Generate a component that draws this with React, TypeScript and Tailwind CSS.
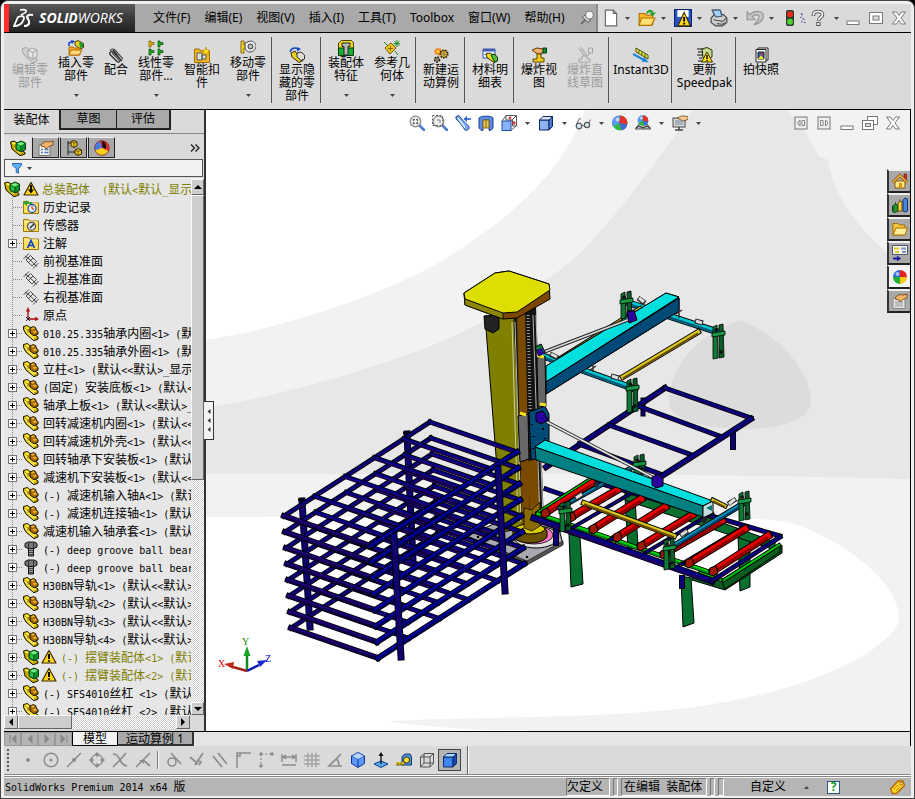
import React from "react";

/* ---------- icons ---------- */

const part = (
  <>
    <path d="M.5 1.500 4.500.5 8 3.500V7l7 5v2l-4 1.800L3 9 .5 4.500z" fill="#b89400" stroke="#1a1400" strokeWidth="1" />
    <path d="M1.500 2 4.500 1.300 7 3.500 4 4.500zM4 8l3-.8 7 5-3 1.300z" fill="#ffe920" />
    <path d="M1.500 3 4 5.500 4.500 8 11 13.500V15L4 8.800 1.500 4.500z" fill="#fff27a" />
    <path d="M7 3 10.500 1.500 13 3v2l2 1.500V9l-4 1.800L7 8z" fill="#a86a00" stroke="#1a1400" />
    <path d="M7.800 3.500 10.500 2.300 12.300 3.300 9.500 4.800zM9.500 6.500 12.500 5.500 14.200 6.800 11.200 8.200z" fill="#f0b030" />
  </>
);
const assembly = (
  <>
    <path d="M.5 2 4 1l3 2v5l8 4.500v1.500l-5 1.800L2 9z" fill="#c8a800" stroke="#1a1400" />
    <path d="M1.500 2.800 4 2 6.500 3.800 4 4.800zM4 8.500 7 7.800 13 12 9.500 13.300z" fill="#fff04a" />
    <path d="M6 3.500 11 1l4.500 2v6.500L11 12 6 9.500z" fill="#109028" stroke="#063a10" />
    <path d="M7 3.800 11 2l3.500 1.500L10.800 5.500z" fill="#7df08a" />
    <path d="M7 5l3.500 1.500v4L7 8.800z" fill="#28c048" />
    <path d="M10.800 6V11.500" stroke="#063a10" strokeWidth=".8" />
  </>
);
const warn = (
  <>
    <path d="M8 1.500 15 14H1z" fill="#ffd51a" stroke="#3a2a00" strokeWidth="1.200" strokeLinejoin="round" />
    <path d="M8 5v5M8 11.200v1.600" stroke="#000" strokeWidth="2" />
  </>
);
const folder = (
  <>
    <path d="M.5 2.500h5L7 4h8.500v10.500H.5z" fill="#ffe05a" stroke="#a07808" />
    <path d="M1.500 5h13" stroke="#fff6b8" />
  </>
);
const plane = (
  <path d="M3 7 7.500 2.500 13.500 8.500 9 13zM5 5l6.500 6M.5 6 6 .5M10 15.500 15.500 10M2 3l3 2M11 11l3 2.500M5.500 9.500 10 5" fill="none" stroke="#222" strokeWidth=".8" />
);
const ball = (
  <>
    <path d="M8 8V1a7 7 0 0 1 7 7z" fill="#e82020" />
    <path d="M8 8h7a7 7 0 0 1-7 7z" fill="#f6c81a" />
    <path d="M8 8v7a7 7 0 0 1-7-7z" fill="#1fae35" />
    <path d="M8 8H1a7 7 0 0 1 7-7z" fill="#2b67e0" />
    <circle cx="5.500" cy="5" r="2" fill="#fff" opacity=".6" />
  </>
);
const viewBall = (
  <>
    <circle cx="8" cy="8" r="7.500" fill="#2fb848" />
    <path d="M7 8 8 .5A7.500 7.500 0 0 1 15.300 9.500z" fill="#e83030" />
    <path d="M7 8 .8 11.500A7.500 7.500 0 0 1 8 .5z" fill="#5a9af0" />
    <path d="M7 8l8.300 1.500A7.500 7.500 0 0 1 10 15.200z" fill="#4468d8" />
    <circle cx="5.500" cy="4.500" r="2" fill="#fff" opacity=".6" />
  </>
);
const hand = (
  <path d="M4 3.500 8 1.500l3 .5 4-1v4l-4 1.500-3 2.500-1-2-4-1z" fill="#f2b56b" stroke="#6b3c0c" strokeWidth=".8" />
);
const funnel = <path d="M2 2h12v2L10 9v6l-3-1.500V9L2 4z" fill="#5ab4f5" stroke="#0a3c98" />;
const cube = (a: string, b: string, c: string) => (
  <>
    <path d="M1.500 5h9.500v10H1.500z" fill={b} stroke="#10286a" />
    <path d="M1.500 5 5 1.500h9.500L11 5z" fill={a} stroke="#10286a" />
    <path d="M11 5l3.500-3.500v10L11 15z" fill={c} stroke="#10286a" />
  </>
);
const gear = (x: number, y: number, r: number, f: string) => (
  <>
    <circle cx={x} cy={y} r={r} fill="none" stroke="#2c1c00" strokeWidth="2" strokeDasharray="1.500 1" />
    <circle cx={x} cy={y} r={r - 0.3} fill={f} stroke="#2c1c00" strokeWidth=".7" />
    <circle cx={x} cy={y} r={r * 0.35} fill="#fff" stroke="#2c1c00" strokeWidth=".7" />
  </>
);
const magnifier = (
  <>
    <path d="M10 10l5 5" stroke="#4b7fd0" strokeWidth="2.600" strokeLinecap="round" />
    <circle cx="6.500" cy="6.500" r="5.300" fill="#f0f0f0" stroke="#888" strokeWidth="1.200" />
  </>
);
const G = "#8d8d8d";

const icons: Record<string, React.ReactNode> = {
  part,
  assembly,
  warn,
  plane,
  ball,
  viewBall,
  funnel,
  rootWarn: (
    <>
      <path d="M8 1.500 15 14H1z" fill="#ffd51a" stroke="#3a2a00" strokeWidth="1.200" strokeLinejoin="round" />
      <path d="M8 4v5" stroke="#000" strokeWidth="1.800" />
      <path d="M5 8.500h6L8 12.500z" fill="#000" />
    </>
  ),
  history: (
    <>
      {folder}
      <path d="M0 4l4-3v2h5v2H4v2z" fill="#2ea82e" />
      <circle cx="9" cy="9.500" r="4" fill="#e8f0ff" stroke="#2c50a8" strokeWidth="1.300" />
      <path d="M9 7v2.500l2 1" stroke="#c01010" fill="none" />
    </>
  ),
  sensor: (
    <>
      {folder}
      <circle cx="8.500" cy="9.300" r="4" fill="#dfe6ee" stroke="#555" strokeWidth="1.300" />
      <path d="M7 11l4-4" stroke="#222" strokeWidth="1.300" />
    </>
  ),
  note: (
    <>
      {folder}
      <path d="M4.500 13 8 5.500 11.500 13M6 10.500h4" stroke="#1046d0" strokeWidth="1.700" fill="none" />
    </>
  ),
  origin: (
    <>
      <path d="M5 13V3M5 12h8" stroke="#a01010" strokeWidth="1.400" />
      <path d="M5 0 2.800 4.500h4.400zM16 12l-4-2.200v4.400z" fill="#b01818" />
      <path d="M3 10l4 4M7 10l-4 4" stroke="#222" />
    </>
  ),
  bolt: (
    <>
      <path d="M2 2.500 5 1h6l3 1.500V6l-3 1.500H5L2 6z" fill="#777" stroke="#111" />
      <path d="M5.500 7.500h5V15h-5z" fill="#aaa" stroke="#111" />
      <path d="M6 9.500h4M6 11.500h4M6 13.500h4M5.500 2v5M10.500 2v5" stroke="#222" strokeWidth=".8" />
    </>
  ),
  editPart: (
    <>
      <path d="M.5 1.500 4.500.5 8 3.500V7l7 5v2l-4 1.800L3 9 .5 4.500z" fill="#d0d0d0" stroke="#a0a0a0" />
      <path d="M6 3 10 1l5 2v6.500L11 12 6 9.500z" fill="#e4e4e4" stroke="#a0a0a0" />
      <path d="M6 3l5 2.500V12M11 5.500 15 3" fill="none" stroke="#a0a0a0" />
    </>
  ),
  insertPart: (
    <>
      <path d="M7 2 10 .5l5.500 3v4L12 9 7 5z" fill="#ead020" stroke="#4a3800" />
      <path d="M11 3l2-1 2 2v3l-3 1z" fill="#16a034" />
      <path d="M1 6V3l3-1.500" stroke="#1246c8" strokeWidth="1.600" fill="none" />
      <path d="M3 0l4 1-3 3z" fill="#1246c8" />
      <path d="M1 7h4l1 1h6v7H1z" fill="#f9a828" stroke="#b06a00" />
      <path d="M3 10h11l-3 5H1z" fill="#ffd878" stroke="#b06a00" />
    </>
  ),
  clip: (
    <>
      <path d="M14 14 5 5a2 2 0 0 0-3 2.500l7 7a2 2 0 0 0 3-2.500L5 2.500" fill="none" stroke="#333" strokeWidth="1.400" />
      <path d="M2 4a3 3 0 0 1 5-1l8 9M4 6l8 8" fill="none" stroke="#555" strokeWidth="1.200" />
    </>
  ),
  pattern: (
    <>
      <path d="M1 1h2v1.500h3v2H3V7H1z" fill="#f0c000" stroke="#6a5000" strokeWidth=".7" />
      <path d="M10 1h2v1.500h3v2h-3V7h-2zM1 9h2v1.500h3v2H3V15H1zM10 9h2v1.500h3v2h-3V15h-2z" fill="#18b020" stroke="#064a0c" strokeWidth=".7" />
    </>
  ),
  smart: (
    <>
      <path d="M.5 2h5l1 2h9v11.500H.5z" fill="#f5b820" stroke="#a07000" />
      <path d="M3 6h5v7H3zM8 8h4v4H8z" fill="#e0e0e0" stroke="#555" />
      <path d="m12 0 1 3 3 .2-2.400 2L14.500 8 12 6.500 9.500 8l.9-2.800L8 3.200 11 3z" fill="#ffe820" stroke="#b07800" strokeWidth=".6" />
    </>
  ),
  moveComp: (
    <>
      <path d="M1 1h3v4h3v3H4v5H1z" fill="#f4d020" stroke="#6a5000" strokeWidth=".8" />
      <path d="M5 3l5-2c4 0 6 3 6 5s-2 6-6 6-4-3-5-4z" fill="#eee" stroke="#444" />
      <circle cx="10.500" cy="6.500" r="2.500" fill="#bbb" stroke="#333" />
    </>
  ),
  showHide: (
    <>
      <path d="M1 5c1-4 5-5 8-3" stroke="#1246c8" strokeWidth="1.600" fill="none" />
      <path d="M8 0l4 2-4 2.500z" fill="#1246c8" />
      <path d="M2 6 6 4l2 3 6 4.500v2L10 15.500 3 10z" fill="#ecd020" stroke="#3a2c00" />
      <path d="M8 6l4-1 3.500 3v4L12 13.500 8 10z" fill="#ddd" stroke="#333" />
    </>
  ),
  asmFeature: (
    <>
      <path d="M.5 3 3.500.5h10L15.500 3v6H.5z" fill="#f0e020" stroke="#4a3c00" />
      <path d="M.5 8h15v7.500H.5z" fill="#16b030" stroke="#063a10" />
      <path d="M4 3h8v3.500h-2V15H6V6.500H4z" fill="#b8b8b8" stroke="#222" />
    </>
  ),
  refGeom: (
    <>
      <path d="M1 8l6-5 5 5-6 6z" fill="#f2c818" stroke="#7a5800" />
      <path d="M4 8.500h5M6.500 6v5" stroke="#8a6400" />
      <path d="M13 0v7M9.500 3.500h6.500M10.500 1l5 5M15.500 1l-5 5" stroke="#128a1a" strokeWidth=".9" />
      <path d="M0 2l4 4M11 11l3 4" stroke="#128a1a" />
    </>
  ),
  motion: (
    <>
      <path d="m5 0 1 2 2-1-.3 2.300L10 4 8 5.300l.8 2L6.500 7 5 9 4 7l-2.500.5.8-2L.5 4l2.200-.7L2.500 1l2 1z" fill="#f08018" />
      <circle cx="5" cy="4.500" r="1.500" fill="#ffe040" />
      {gear(11, 7, 3.6, "#f0c828")}
      {gear(4, 12.5, 2.3, "#ccc")}
    </>
  ),
  bom: (
    <>
      <path d="M1 2h12v9H1z" fill="#f2f6ff" stroke="#3a56a0" />
      <path d="M1 2h12v2.500H1z" fill="#4060b8" />
      <path d="M1 7.500h12M5 4v7" stroke="#8fa0cc" />
      <path d="M4 7 8 6l7 5v3l-3 1.500-7-5z" fill="#f0e020" stroke="#3a3000" />
      <path d="M9 8l3-1 3.500 3v4l-3 1z" fill="#50c030" stroke="#063a10" />
    </>
  ),
  explode: (
    <>
      <path d="M1 3 6 1l6 1 1 3-5 2-3-1z" fill="#efb068" stroke="#6b3c0c" />
      <path d="M12 1h3.500v5H12z" fill="#109028" stroke="#063a10" />
      <path d="M6 7h4v4h3v4H2v-3h4z" fill="#f2cc18" stroke="#5c4600" />
      <path d="M10 8l3-3" stroke="#222" strokeDasharray="1 1" />
    </>
  ),
  explodeLine: (
    <>
      <path d="M3 1l6 8" stroke="#a2a2a2" strokeWidth="3" />
      <path d="M3 1l6 8" stroke="#ddd" strokeWidth="1.200" />
      <path d="M11.500 1h4v5h-4zM5 9h5v3h3v3H2v-3h3z" fill="#ddd" stroke="#a2a2a2" />
      <path d="M10 9l3-3" stroke="#a2a2a2" />
    </>
  ),
  instant: (
    <>
      <path d="M3 1l12 7v4L3 5z" fill="#e4ea50" stroke="#4c5200" />
      <path d="M6 3v3M9 5v3M12 7v3" stroke="#4c5200" />
      <path d="M0 7l11 6" stroke="#1c86dc" strokeWidth="2" />
      <path d="M15.500 15.500 8.500 14.500 11.500 10z" fill="#1c86dc" />
    </>
  ),
  speedpak: (
    <>
      <path d="M5 2l5-1.500L15 3v7l-5 3-4-2z" fill="#c4d890" stroke="#26380a" />
      <path d="M0 2h6M1 5h5M0 8h6M2 11h3M1 14h4" stroke="#111" />
      <path d="M10 5l5.500 10h-11z" fill="#ffdf20" stroke="#3a2a00" />
      <path d="M10 8v4M10 13v1.300" stroke="#000" strokeWidth="1.400" />
    </>
  ),
  snapshot: (
    <>
      <path d="M5 1h10v12H5z" fill="#fff" stroke="#222" />
      <path d="M3 2.500h10V15H3z" fill="#fff" stroke="#222" />
      <path d="M5 5h6v7H5z" fill="#2858b8" stroke="#222" />
      <path d="M5 12l3-4 3 4z" fill="#f0e020" />
      <circle cx="9" cy="7" r="1.200" fill="#e03020" />
    </>
  ),
  newDoc: <path d="M3 1h7l3 3v11H3zM10 1v3h3" fill="#fff" stroke="#666" />,
  openDoc: (
    <>
      <path d="M1 4h5l1.500 1.500H13V14H1z" fill="#f8b828" stroke="#b07000" />
      <path d="M3 8h12l-3 6.500H1z" fill="#ffe070" stroke="#b07000" />
      <path d="M8 4c1-3 4-3 5-1" stroke="#18a028" strokeWidth="1.800" fill="none" />
      <path d="M10 3h6l-3 3.500z" fill="#18a028" />
    </>
  ),
  save: (
    <>
      <path d="M.5 .5h15v15H.5z" fill="#2a56c8" stroke="#0b2470" />
      <path d="M3 1h10v6H3z" fill="#fff" />
      <path d="M9 3l5.500 12h-11z" fill="#ffd51a" stroke="#3a2a00" />
      <path d="M9 7v4M9 12.300v1.400" stroke="#000" strokeWidth="1.700" />
    </>
  ),
  print: (
    <>
      <path d="M2 1h7l2 5H4z" fill="#8fc0f0" stroke="#46607c" />
      <path d="M1 8l3-3h8l3 3v4l-4 3H5l-4-3z" fill="#cfcfcf" stroke="#444" />
      <path d="M2 1h7l1.500 5.500-5.500.5z" fill="#a8d0f4" stroke="#46607c" />
      <path d="M3 9.500l8 1.500 3.500-2.500M6 13l5 .5 2.500-1.500" fill="none" stroke="#555" />
    </>
  ),
  undo: (
    <path d="M1 2.500v7h7L5.500 7C9 4 12 5 11.500 8c-.5 2-2 4-4.500 6 5-1 8-4 8.500-7.500C15.500 1.500 8 .5 3.500 5z" fill="#c6c6c6" stroke="#959595" />
  ),
  traffic: (
    <>
      <rect x="4" y="0" width="8" height="16" rx="2" fill="#2c3c30" />
      <circle cx="8" cy="4.300" r="3" fill="#f02818" />
      <circle cx="8" cy="11.700" r="3" fill="#50d030" />
    </>
  ),
  dots: <path d="M4 2l2 2M3 7h2M6 9l3 1M4 13h2M8 14h2" stroke="#4a3c90" strokeWidth="1.500" />,
  help: (
    <>
      <path d="M3.500 6V4.500c0-4 9-4 9 0 0 3-4 3-4 6.500" fill="none" stroke="#555" strokeWidth="3.600" />
      <path d="M3.500 5.500v-1c0-4 9-4 9 0 0 3-4 3-4 6" fill="none" stroke="#fff" strokeWidth="1.700" />
      <rect x="6.800" y="12.500" width="3.200" height="3" fill="#fff" stroke="#555" />
    </>
  ),
  min: <rect x="2" y="11" width="12" height="3.500" fill="#fff" stroke="#777" />,
  max: (
    <>
      <rect x="1.500" y="2.500" width="13" height="11" fill="#fff" stroke="#777" />
      <rect x="5" y="6" width="6" height="4" fill="#ddd" stroke="#777" />
    </>
  ),
  restore: (
    <>
      <rect x="5.500" y="1.500" width="10" height="8" fill="#fff" stroke="#777" />
      <rect x=".5" y="5.500" width="11" height="9" fill="#fff" stroke="#777" />
      <rect x="3.500" y="8.500" width="5" height="3" fill="#ddd" stroke="#777" />
    </>
  ),
  close: <path d="M1.500 2h4L8 5.500 10.500 2h4L10 8l4.500 6h-4L8 10.500 5.500 14h-4L6 8z" fill="#fff" stroke="#777" />,
  paneL: (
    <>
      <rect x="2" y="2" width="12" height="12" fill="#eee" stroke="#777" />
      <path d="M7 5v6L4.500 8zM9 5.500h2.500v5H9z" fill="#fff" stroke="#777" strokeWidth=".9" />
    </>
  ),
  paneR: (
    <>
      <rect x="2" y="2" width="12" height="12" fill="#eee" stroke="#777" />
      <path d="M9.500 5v6L12 8zM4.500 5.500H7v5H4.500z" fill="#fff" stroke="#777" strokeWidth=".9" />
    </>
  ),
  pin: (
    <>
      <path d="M2 14l4-4" stroke="#555" strokeWidth="1.300" />
      <path d="M3.500 7.500 9 12.500c2-.5 2-2 2-3.500l3-3-5-4.500-3 4c-1 0-2 .5-2.500 2z" fill="#ccc" stroke="#555" />
      <circle cx="10.500" cy="5" r="4" fill="#f4f4f4" stroke="#777" />
    </>
  ),
  zoomFit: (
    <>
      {magnifier}
      <path d="M4 5.500 5.500 4M9 5.500 7.500 4M4 7.500 5.500 9M9 7.500 7.500 9" stroke="#444" strokeWidth="1.400" />
    </>
  ),
  zoomArea: (
    <>
      {magnifier}
      <path d="M.5 .5h10v10H.5z" fill="none" stroke="#666" strokeDasharray="2 1.500" />
      <path d="M5 5h3v3" fill="none" stroke="#777" />
    </>
  ),
  prevView: (
    <>
      <path d="M1 1.500 4 .5l4 5 5.500 5.500c2 2.500-1 5-3.500 4L5 8 1 4z" fill="#7aa8ee" stroke="#1f4a98" />
      <path d="M3 3l7 9.500" stroke="#e4f0ff" strokeWidth="1.500" />
      <path d="M16 4h-5" stroke="#2a5fd0" strokeWidth="1.600" />
      <path d="M12 1v6L8.500 4z" fill="#2a5fd0" />
    </>
  ),
  section: (
    <>
      <path d="M1 3c2-2.500 12-2.500 14 0v10c-1 2-3 2.500-4 2.500V5H5v10.500c-2 0-3-1-4-2.500z" fill="#5b8ce8" stroke="#1c3c90" />
      <path d="M5 5h6v8H5z" fill="#e6c860" stroke="#8a6a10" />
      <path d="M8 5v8" stroke="#8a6a10" />
    </>
  ),
  viewOrient: (
    <>
      <path d="M5 .5h10.500V11h-4V5H5z" fill="#fff" stroke="#555" />
      <path d="M1 6h9v9.500H1z" fill="#8ab4f4" stroke="#1c4aa8" />
      <path d="M1 6 5 .5M10 6l5-5M10 15.500l5-4.500" stroke="#555" />
      <path d="M7.500 3h3M9 1.500v3M11 8h4M13 6v4" stroke="#d02020" strokeWidth="1.200" />
    </>
  ),
  display: cube("#d8e6fc", "#8cb2f0", "#4a78cc"),
  shaded: cube("#a8dcff", "#3f86f0", "#1648b0"),
  wire: (
    <path d="M1.500 5h9.500v10H1.500zM1.500 5 5 1.500h9.500L11 5M14.500 1.500v10L11 15M5 2v9h9M5 11l-3.500 4" fill="none" stroke="#444" strokeWidth=".9" />
  ),
  glasses: (
    <>
      <circle cx="4" cy="11" r="2.800" fill="#cfe6f4" stroke="#555" strokeWidth="1.200" />
      <circle cx="12" cy="10" r="2.600" fill="#cfe6f4" stroke="#555" strokeWidth="1.200" />
      <path d="M7 10.500h2.500M1.500 9 4.500 3.500 6 4M14 8l1.500-3.500" stroke="#666" fill="none" />
    </>
  ),
  scene: (
    <>
      <path d="M0 14l4-5h8l4 5z" fill="#bbb" stroke="#555" />
      <g transform="translate(2.5 0) scale(.7)">{viewBall}</g>
      <path d="M1 13l3-2 4 2 4-2 3 2" stroke="#222" fill="none" />
    </>
  ),
  viewSet: (
    <>
      <rect x="1" y="3" width="12" height="9" fill="#d8d8d8" stroke="#444" />
      <rect x="3" y="5" width="8" height="5" fill="#a4b0bc" />
      <path d="M3 15h8M7 12v3" stroke="#444" strokeWidth="1.500" />
      <path d="M5 3 10 .8l6 .7v3L11 6z" fill="#efc898" stroke="#6b3c0c" strokeWidth=".7" />
    </>
  ),
  property: (
    <>
      <path d="M1 5h11v10.500H1z" fill="#f0f0ec" stroke="#777" />
      <path d="M3 9.500h2M6.500 9.500h4M3 12.500h2M6.500 12.500h4" stroke="#4a78b8" strokeWidth="1.400" />
      {hand}
    </>
  ),
  config: (
    <>
      <path d="M2 1v14M2 3h5M2 12h7" stroke="#222" fill="none" />
      <path d="M5 1.500 8 .5l3 1.500v4L8 7.500 5 6zM9 10l3-1.500 3.500 1.500v4l-3.500 1.500L9 14z" fill="#f2cc18" stroke="#3a2c00" />
      <path d="M5 1.500 8 3l3-1M8 3v4.500M9 10l3 1.500 3.500-1.500M12 11.500v4" stroke="#3a2c00" fill="none" strokeWidth=".7" />
    </>
  ),
  dimXpert: (
    <>
      <circle cx="8" cy="8" r="7.500" fill="#e83028" />
      <path d="M8 8 1 10.500A7.500 7.500 0 0 1 6 1z" fill="#4a7ce8" />
      <path d="M8 8l-7 2.500a7.500 7.500 0 0 0 13.500.5z" fill="#f0d020" />
      <path d="M8 1c3 0 5 4 4 8L8 7z" fill="#1a0c10" />
      <circle cx="8" cy="8" r="7.300" fill="none" stroke="#7a2020" strokeWidth=".6" />
    </>
  ),
  home: (
    <>
      <path d="M12 1h2.500v6H12z" fill="#c83020" stroke="#6a1408" strokeWidth=".6" />
      <path d="M3 8h10v7H3z" fill="#ffe880" stroke="#8a5a08" />
      <path d="M.5 9.500 8 2.500l7.500 7" fill="none" stroke="#8a4a08" strokeWidth="3" />
      <path d="M.5 9.500 8 2.500l7.500 7" fill="none" stroke="#f0b850" strokeWidth="1.500" />
      <path d="M7 10h3v5H7z" fill="#d89020" />
    </>
  ),
  library: (
    <>
      <path d="M.5 9l3-2 2 1v6.500l-3 1-2-1z" fill="#18a030" stroke="#063a10" />
      <path d="M6 6l2-2 2 1v9H6z" fill="#f0d040" stroke="#6a5000" />
      <path d="M11 3l2-2 2.500 1v12L13 15l-2-1z" fill="#4a86e0" stroke="#12306e" />
      <path d="M3.500 7V5M8 4V2.500M2 9v5" stroke="#444" />
    </>
  ),
  explorer: (
    <>
      <path d="M1 2.500h5L7.500 4H13v10H1z" fill="#f8c83c" stroke="#a87000" />
      <path d="M4 7h11.500L13 14H1z" fill="#ffeb98" stroke="#a87000" />
    </>
  ),
  palette: (
    <>
      <path d="M.5 .5h15v9H.5z" fill="#f4f4f4" stroke="#556" />
      <path d="M2 2.500h5v2H2zM3 6h4v2H3z" fill="#e8c820" />
      <path d="M9 2.500h5v2H9zM10 6h4v2h-4z" fill="#7a90b8" />
      <path d="M1 13.500h5" stroke="#1818a8" strokeWidth="2" />
      <path d="M5 10.500v6L9 13.500z" fill="#1818a8" />
    </>
  ),
  custom: (
    <>
      <path d="M1 5h12v10.500H1z" fill="#e4e4e4" stroke="#888" />
      <path d="M3 9h8M3 11h8M3 13h8" stroke="#999" />
      {hand}
    </>
  ),
  skPoint: <circle cx="8" cy="8" r="2" fill={G} />,
  skCircle: (
    <>
      <circle cx="8" cy="8" r="6.800" fill="none" stroke={G} strokeWidth="1.500" />
      <circle cx="8" cy="8" r="1.600" fill={G} />
    </>
  ),
  skLine: (
    <>
      <path d="M1 15 15 1" stroke={G} strokeWidth="1.500" />
      <circle cx="8" cy="8" r="2" fill={G} />
    </>
  ),
  skQuad: (
    <>
      <circle cx="8" cy="8" r="5.500" fill="none" stroke={G} strokeWidth="1.300" />
      <path d="M8 0l2.500 2.500L8 5 5.500 2.500zM8 11l2.500 2.500L8 16l-2.500-2.500zM0 8l2.500-2.500L5 8l-2.500 2.500zM11 8l2.500-2.500L16 8l-2.500 2.500z" fill={G} />
    </>
  ),
  skCross: <path d="M1 2c5 0 6 4 7 6s3 6 7 6M14 1 8 8 1 15" stroke={G} strokeWidth="1.700" fill="none" />,
  skTrim: (
    <>
      <path d="M1 15 15 1M8 8l7 6" stroke={G} strokeWidth="1.700" />
      <path d="M4 8h5v4z" fill={G} />
    </>
  ),
  skTan: (
    <>
      <circle cx="6" cy="10" r="4" fill="none" stroke={G} strokeWidth="1.600" />
      <path d="M5 1l10 11" stroke={G} strokeWidth="1.600" />
    </>
  ),
  skPerp: <path d="M14 1 6 13M1 5l8 7M8 8l4 2-2 3" stroke={G} strokeWidth="1.700" fill="none" />,
  skPar: <path d="M1 4l9 11M6 1l9 11" stroke={G} strokeWidth="1.700" />,
  skCorner: <path d="M2 16V1h14M5 1v3H2" stroke={G} strokeWidth="1.500" fill="none" />,
  skDots: (
    <>
      <path d="M3 2v12M3 2h11" stroke={G} strokeWidth="1.200" strokeDasharray="2 2" />
      <circle cx="3" cy="2" r="1.800" fill={G} />
      <circle cx="14" cy="2" r="1.800" fill={G} />
      <circle cx="3" cy="14" r="1.800" fill={G} />
    </>
  ),
  skDim: <path d="M1 2v8M15 2v8M2 5h12M1 13h14M5 3 2 5l3 2M11 3l3 2-3 2" stroke={G} strokeWidth="1.500" fill="none" />,
  skGrid: <path d="M4 1v14M8 1v14M12 1v14M0 4h16M0 8h16M0 12h16" stroke={G} strokeWidth="1" />,
  skAngle: <path d="M14 2 2 14h13M9 7c3 1 3 4 3 7" stroke={G} strokeWidth="1.700" fill="none" />,
  iso: (
    <>
      <path d="M8 .5 14.500 4v7.500L8 15.500 1.500 11.500V4z" fill="#5c98f8" stroke="#0f3494" />
      <path d="M8 .5 14.500 4 8 7.500 1.500 4z" fill="#b8d8ff" stroke="#0f3494" strokeWidth=".6" />
      <path d="M8 7.500V15" stroke="#0f3494" />
    </>
  ),
  normal: (
    <>
      <path d="M1 12l7-3 7 3-7 3.500z" fill="#5aaaf0" stroke="#0f3c90" />
      <path d="M8 12V2" stroke="#111" strokeWidth="1.300" />
      <path d="M8 0 5.500 4h5z" fill="#111" />
    </>
  ),
  tape: (
    <>
      <path d="M6 4.500 9 2h5l1.500 2.500V13H6z" fill="#4a90d8" stroke="#123a70" />
      <circle cx="10.500" cy="8" r="3" fill="#ffe040" stroke="#403000" />
      <path d="M0 11.500h8" stroke="#e8c000" strokeWidth="2.600" />
      <path d="M0 13h8M2 10.500v2M5 10.500v2" stroke="#403000" strokeWidth=".7" />
    </>
  ),
  tag: (
    <>
      <path d="M1.500 10 9 2h5l1.500 4.500L7.500 14.500h-4z" fill="#ffd028" stroke="#b06800" strokeWidth="1.300" />
      <circle cx="12" cy="4.800" r="1.300" fill="#fff" stroke="#b06800" />
      <path d="M5 10l4-4M7 12l4-4" stroke="#c88a00" />
    </>
  ),
};

function Icon({ name, className = "size-4" }: { name: string; className?: string }) {
  return (
    <svg viewBox="0 0 16 16" className={"shrink-0 " + className} aria-hidden="true">
      {icons[name]}
    </svg>
  );
}

function Caret({ up = false }: { up?: boolean }) {
  return (
    <svg viewBox="0 0 5 3" className="h-[3px] w-[5px] shrink-0" aria-hidden="true">
      <path d={up ? "M0 3h5L2.500 0z" : "M0 0h5L2.500 3z"} fill="#444" />
    </svg>
  );
}

/* ---------- title bar ---------- */

const menus = ["文件(F)", "编辑(E)", "视图(V)", "插入(I)", "工具(T)", "Toolbox", "窗口(W)", "帮助(H)"];

function TitleBar() {
  return (
    <header className="flex h-[29px] shrink-0 items-stretch border-b border-black bg-[#dadada]">
      <div className="flex w-[131px] shrink-0 items-center gap-1 border-l-[5px] border-[#ff2a2a] bg-linear-to-b from-[#5a5a5a] via-[#3a3a3a] to-[#222] pl-1 text-white">
        <svg viewBox="0 0 22 20" className="h-5 w-[22px] shrink-0" fill="none" stroke="#fff" aria-hidden="true">
          <path d="M7 2c4-1 7 0 6 2-1 1-3 2-5 3" strokeWidth="1.600" />
          <path d="M1 18 5 9c6-2 7 0 5 4s-5 5-9 5z" strokeWidth="1.800" />
          <path d="M20 7c-5-1-7 1-5 4s2 7-4 7" strokeWidth="2.200" />
        </svg>
        <span className="font-['Open_Sans',sans-serif] text-sm leading-4 italic">
          <b>SOLID</b>WORKS
        </span>
      </div>
      <nav className="flex shrink-0 items-center gap-[14px] border-r-2 border-[#8a8a8a] bg-[#a9a9a9] pr-px pl-[18px] whitespace-nowrap">
        {menus.map((m) => (
          <button key={m} type="button">
            {m}
          </button>
        ))}
        <button type="button" aria-label="固定">
          <Icon name="pin" />
        </button>
      </nav>
      <div className="flex min-w-0 flex-1 items-center pl-1">
        {["newDoc", "openDoc", "save", "print", "undo"].map((n) => (
          <button key={n} type="button" aria-label={n} className="flex w-9 shrink-0 items-center gap-[5px]">
            <Icon name={n} className="size-[18px]" />
            <Caret />
          </button>
        ))}
        <button type="button" aria-label="重建模型">
          <Icon name="traffic" />
        </button>
        <button type="button" aria-label="选项" className="w-3 shrink-0">
          <Icon name="dots" className="size-3" />
        </button>
        <button type="button" aria-label="帮助" className="flex items-center gap-2">
          <Icon name="help" />
          <Caret />
        </button>
        <div className="ml-auto flex gap-[7px] pr-1">
          {["min", "max", "close"].map((n) => (
            <button key={n} type="button" aria-label={n}>
              <Icon name={n} />
            </button>
          ))}
        </div>
      </div>
    </header>
  );
}

/* ---------- command ribbon ---------- */

type Cmd = { icon: string; lines: string[]; drop?: boolean; off?: boolean; size?: string };

const groups: Cmd[][] = [
  [
    { icon: "editPart", lines: ["编辑零", "部件"], off: true },
    { icon: "insertPart", lines: ["插入零", "部件"], drop: true },
    { icon: "clip", lines: ["配合"], size: "w-[34px]" },
    { icon: "pattern", lines: ["线性零", "部件..."], drop: true },
    { icon: "smart", lines: ["智能扣", "件"] },
    { icon: "moveComp", lines: ["移动零", "部件"], drop: true },
  ],
  [{ icon: "showHide", lines: ["显示隐", "藏的零", "部件"] }],
  [
    { icon: "asmFeature", lines: ["装配体", "特征"], drop: true },
    { icon: "refGeom", lines: ["参考几", "何体"], drop: true },
  ],
  [{ icon: "motion", lines: ["新建运", "动算例"] }],
  [{ icon: "bom", lines: ["材料明", "细表"] }],
  [
    { icon: "explode", lines: ["爆炸视", "图"] },
    { icon: "explodeLine", lines: ["爆炸直", "线草图"], off: true },
  ],
  [{ icon: "instant", lines: ["Instant3D"], size: "w-[60px]" }],
  [{ icon: "speedpak", lines: ["更新", "Speedpak"], size: "w-[61px]" }],
  [{ icon: "snapshot", lines: ["拍快照"] }],
];

function Ribbon() {
  return (
    <div className="flex h-[77px] shrink-0 border-b border-black bg-[#dadada] pl-[3px]">
      {groups.map((g, i) => (
        <React.Fragment key={i}>
          {i > 0 && <div className="mr-[2px] mt-1 h-[66px] w-px shrink-0 bg-[#555]" />}
          {g.map((c) => (
            <button
              key={c.icon}
              type="button"
              disabled={c.off}
              className={
                "flex shrink-0 flex-col items-center leading-[13px] whitespace-nowrap " +
                (c.size ?? "w-[46px]") +
                (c.drop ? " pt-[7px]" : " pt-[14px]") +
                (c.off ? " text-[#9c9c9c]" : "")
              }
            >
              <Icon name={c.icon} />
              <span>
                {c.lines.map((l, k) => (
                  <React.Fragment key={k}>
                    {k > 0 && <br />}
                    {l}
                  </React.Fragment>
                ))}
              </span>
              {c.drop && (
                <span className="pt-3">
                  <Caret />
                </span>
              )}
            </button>
          ))}
        </React.Fragment>
      ))}
    </div>
  );
}

/* ---------- feature tree ---------- */

type Node = { icon: string; text: string; plus?: boolean; alert?: boolean };

const nodes: Node[] = [
  { icon: "history", text: "历史记录" },
  { icon: "sensor", text: "传感器" },
  { icon: "note", text: "注解", plus: true },
  { icon: "plane", text: "前视基准面" },
  { icon: "plane", text: "上视基准面" },
  { icon: "plane", text: "右视基准面" },
  { icon: "origin", text: "原点" },
  { icon: "part", text: "010.25.335轴承内圈<1> (默认", plus: true },
  { icon: "part", text: "010.25.335轴承外圈<1> (默认", plus: true },
  { icon: "part", text: "立柱<1> (默认<<默认>_显示", plus: true },
  { icon: "part", text: "(固定) 安装底板<1> (默认<", plus: true },
  { icon: "part", text: "轴承上板<1> (默认<<默认>_", plus: true },
  { icon: "part", text: "回转减速机内圈<1> (默认<<", plus: true },
  { icon: "part", text: "回转减速机外壳<1> (默认<<", plus: true },
  { icon: "part", text: "回转轴承下安装板<1> (默认", plus: true },
  { icon: "part", text: "减速机下安装板<1> (默认<<", plus: true },
  { icon: "part", text: "(-) 减速机输入轴A<1> (默认", plus: true },
  { icon: "part", text: "(-) 减速机连接轴<1> (默认", plus: true },
  { icon: "part", text: "减速机输入轴承套<1> (默认", plus: true },
  { icon: "bolt", text: "(-) deep groove ball bear", plus: true },
  { icon: "bolt", text: "(-) deep groove ball bear", plus: true },
  { icon: "part", text: "H30BN导轨<1> (默认<<默认>", plus: true },
  { icon: "part", text: "H30BN导轨<2> (默认<<默认>", plus: true },
  { icon: "part", text: "H30BN导轨<3> (默认<<默认>", plus: true },
  { icon: "part", text: "H30BN导轨<4> (默认<<默认>", plus: true },
  { icon: "assembly", text: "(-) 摆臂装配体<1> (默认", plus: true, alert: true },
  { icon: "assembly", text: "(-) 摆臂装配体<2> (默认", plus: true, alert: true },
  { icon: "part", text: "(-) SFS4010丝杠 <1> (默认", plus: true },
  { icon: "part", text: "(-) SFS4010丝杠 <2> (默认", plus: true },
];

/* Half-width characters take half the width of a Chinese one, as in a console font. */
function Mixed({ text }: { text: string }) {
  return (
    <span className="whitespace-pre">
      {text.split(/([\x20-\x7e]+)/).map((run, i) =>
        i % 2 ? (
          <span key={i} className="font-['DejaVu_Sans_Mono',monospace] text-[10px]">
            {run}
          </span>
        ) : (
          run
        ),
      )}
    </span>
  );
}

function Tree() {
  return (
    <ul className="min-w-0 flex-1 overflow-hidden bg-[#e6e6e6] pt-px leading-4">
      <li className="flex h-[18px] items-center text-[#808000]">
        <Icon name="assembly" />
        <Icon name="rootWarn" className="mx-[3px] size-4" />
        <span className="pt-[2px]">
          <Mixed text="总装配体  (默认<默认_显示" />
        </span>
      </li>
      {nodes.map((n, i) => (
        <li key={i} className={"flex h-[18px] items-center " + (n.alert ? "text-[#808000]" : "")}>
          <span className="flex h-full w-[19px] shrink-0 items-center pl-1">
            {n.plus ? (
              <svg viewBox="0 0 15 18" className="h-[18px] w-[15px]" aria-hidden="true">
                <path d="M4.500 0v18M9 9.500h6" stroke="#888" strokeDasharray="1 1" />
                <rect x=".5" y="5.500" width="8" height="8" fill="#fff" stroke="#777" />
                <path d="M2 9.500h5M4.500 7v5" stroke="#000" />
              </svg>
            ) : (
              <svg viewBox="0 0 15 18" className="h-[18px] w-[15px]" aria-hidden="true">
                <path d="M4.500 0v18M5 9.500h10" stroke="#888" strokeDasharray="1 1" />
              </svg>
            )}
          </span>
          <Icon name={n.icon} />
          {n.alert && <Icon name="warn" className="ml-0.5 size-4" />}
          <span className="pt-[2px] pl-1">
            <Mixed text={n.text} />
          </span>
        </li>
      ))}
    </ul>
  );
}

const track =
  "bg-[repeating-conic-gradient(#ffffff_0_25%,#cfcfcf_0_50%)] bg-[length:2px_2px]";
const knob = "border border-t-[#fafafa] border-r-[#666] border-b-[#666] border-l-[#fafafa] bg-[#cdcdcd]";

function ScrollKey({ dir, className }: { dir: string; className: string }) {
  return (
    <button type="button" aria-label={"scroll " + dir} className={"flex shrink-0 items-center justify-center " + knob + " " + className}>
      <svg viewBox="0 0 8 8" className="size-2" aria-hidden="true">
        <path
          d={dir === "up" ? "M0 6h8L4 2z" : dir === "down" ? "M0 2h8L4 6z" : dir === "left" ? "M6 0v8L2 4z" : "M2 0v8l4-4z"}
          fill="#000"
        />
      </svg>
    </button>
  );
}

function SidePanel() {
  const tabs = ["assembly", "property", "config", "dimXpert"];
  return (
    <aside className="relative flex w-[202px] shrink-0 flex-col border-r-2 border-[#333] bg-[#dadada]">
      <div className="flex h-5 shrink-0 leading-4">
        <button type="button" className="w-[55px]">装配体</button>
        <button type="button" className="w-[57px] border-b-2 border-l-2 border-[#222] bg-[#a9a9a9]">草图</button>
        <button type="button" className="w-[55px] border-r-2 border-b-2 border-l border-[#222] bg-[#a9a9a9]">评估</button>
      </div>
      <div className="mt-[3px] h-px shrink-0 bg-[#888]" />
      <div className="mt-[3px] flex h-[21px] shrink-0 gap-px">
        {tabs.map((t, i) => (
          <button
            key={t}
            type="button"
            aria-label={t}
            className={
              "flex w-[27px] items-center justify-center " +
              (i ? "border border-[#222] border-t-[#eee] bg-[#a9a9a9]" : "bg-[#e2e2e2]")
            }
          >
            <Icon name={t} />
          </button>
        ))}
        <button type="button" aria-label="更多" className="ml-auto flex items-center pr-1">
          <svg viewBox="0 0 10 8" className="h-2 w-[10px]" fill="none" stroke="#222" strokeWidth="1.400" aria-hidden="true">
            <path d="m1 .5 3.500 3.500L1 7.500M5.500.5 9 4 5.500 7.500" />
          </svg>
        </button>
      </div>
      <label className="mt-px mr-px flex h-[18px] shrink-0 items-center gap-1 border border-[#555] bg-[#f2f2f2] pl-[6px]">
        <Icon name="funnel" className="size-3" />
        <Caret />
        <input type="text" aria-label="过滤" className="min-w-0 flex-1 bg-transparent outline-none" />
      </label>
      <div className="mt-px flex min-h-0 flex-1 border-t border-[#eee]">
        <Tree />
        <div className={"flex w-[13px] shrink-0 flex-col " + track}>
          <ScrollKey dir="up" className="h-4 w-full" />
          <div className={"h-[285px] " + knob} />
          <ScrollKey dir="down" className="mt-auto h-[13px] w-full" />
        </div>
      </div>
      <div className={"mb-[2px] flex h-[14px] shrink-0 " + track}>
        <ScrollKey dir="left" className="w-[14px]" />
        <div className={"w-[54px] " + knob} />
        <ScrollKey dir="right" className="ml-auto w-[14px]" />
        <div className="w-[14px] bg-[#dadada]" />
      </div>
      <button
        type="button"
        aria-label="折叠面板"
        className="absolute top-[291px] -right-[10px] z-10 flex h-[39px] w-[10px] flex-col items-center justify-center gap-1 border border-l-0 border-[#333] bg-[#f2f2f2]"
      >
        {[0, 1, 2].map((k) => (
          <svg key={k} viewBox="0 0 4 5" className="h-[5px] w-1" aria-hidden="true">
            <path d="M3.500 0v5L.5 2.500z" fill="#333" />
          </svg>
        ))}
      </button>
    </aside>
  );
}

/* ---------- 3D model ---------- */

type P = [number, number];

function Bar({ a, b, w = 5, c = "#00008c", d = "#1c0060" }: { a: P; b: P; w?: number; c?: string; d?: string }) {
  const s = `M${a[0]} ${a[1]}L${b[0]} ${b[1]}`;
  const lower = `M${a[0]} ${a[1] + w / 4}L${b[0]} ${b[1] + w / 4}`;
  return (
    <>
      <path d={s} stroke="#000" strokeWidth={w + 1} strokeLinecap="square" />
      <path d={s} stroke={c} strokeWidth={w - 1} strokeLinecap="square" />
      <path d={lower} stroke={d} strokeWidth={w / 2 - 0.5} />
    </>
  );
}

function Rack() {
  const levels = [7, 6, 5, 4, 3, 2, 1, 0];
  return (
    <g>
      <Bar a={[407, 434]} b={[413, 560]} w={6} />
      <Bar a={[302, 501]} b={[310, 627]} w={6} />
      {levels.map((k) => {
        const L: P = [284 + k, 516 + 16 * k];
        const T: P = [L[0] + 146, L[1] - 94];
        const B: P = [L[0] + 87, L[1] + 30];
        const R: P = [L[0] + 233, L[1] - 64];
        return (
          <g key={k}>
            <Bar a={L} b={T} w={4} />
            <Bar a={T} b={R} w={4} d="#22006a" />
            {[0.21, 0.42, 0.62, 0.82].map((f) => (
              <Bar key={f} a={[L[0] + 146 * f, L[1] - 94 * f]} b={[B[0] + 146 * f, B[1] - 94 * f]} w={4} d="#22006a" />
            ))}
            <Bar a={L} b={B} w={5} c="#1c0078" d="#100040" />
            <Bar a={B} b={R} w={5} c="#0000a4" d="#000058" />
          </g>
        );
      })}
      <Bar a={[394, 536]} b={[401, 657]} w={6} />
      <Bar a={[498, 469]} b={[505, 591]} w={6} />
      <path d="M403 433h8M298 500h8" stroke="#000" strokeWidth="2" />
    </g>
  );
}

function Grip({ x, y, h }: { x: number; y: number; h: number }) {
  return (
    <g stroke="#000" strokeWidth=".8">
      <path d={`M${x} ${y + 2}l4-2 1 ${h}-5 1z`} fill="#0d7a35" />
      <path d={`M${x + 6} ${y}l4-1 1 ${h}-5 1z`} fill="#0a5c28" />
      <path d={`M${x - 1} ${y + 8}l13-2v4l-13 2z`} fill="#159a45" />
      <circle cx={x + 3} cy={y + 5} r="1.300" fill="#222" />
      <circle cx={x + 8} cy={y + h - 6} r="1.300" fill="#222" />
    </g>
  );
}

const rollers: [P, P][] = [
  [[545, 513], [592, 483]],
  [[571, 517], [617, 490]],
  [[593, 529], [641, 499]],
  [[617, 537], [665, 507]],
  [[641, 546], [692, 515]],
  [[664, 554], [722, 521]],
  [[689, 563], [745, 529]],
  [[713, 571], [768, 536]],
];

const dividers: [P, P][] = [
  [[572, 528], [640, 488]],
  [[608, 541], [672, 502]],
  [[645, 553], [712, 513]],
  [[680, 565], [742, 528]],
];

function Model() {
  return (
    <svg viewBox="206 110 704 621" preserveAspectRatio="xMidYMid slice" className="absolute inset-0 size-full" fill="none" role="img" aria-label="总装配体">
      <path fill="#fff" d="M206 110h704v621H206z" />
      <path fill="#f2f2f2" d="M206 340C300 325 390 290 440 262 500 225 560 180 585 110H910v621H540c-60 0-140-6-150-10 150-6 260-2 350-22 80-16 140-45 158-75 8-30-40-80-110-102-100-12-200-5-582-5z" />
      <path fill="#e7e7e7" d="M206 408C290 395 400 360 450 338 500 315 540 285 573 260 620 215 665 150 693 110H787c12 12 25 30 31 46l10 4c6 35 25 62 59 93l23 20V479c-110-3-254-5-404-5H206z" />
      <path fill="#dcdcdc" d="M740 320c-44 15-71 48-71 82 0 20 42 27 77 27s66-10 65-28c-2-32-31-65-71-81z" />

      {/* base plate */}
      <path d="M467 536l40-18 50 4 6 22-36 20z" fill="#a8a8b0" stroke="#000" />
      <path d="M467 536l60 25v4l-60-26zM527 561l36-20v4l-36 20z" fill="#555" stroke="#000" strokeWidth=".6" />
      <circle cx="478" cy="537" r="1.300" fill="#000" />
      <circle cx="527" cy="557" r="1.300" fill="#000" />
      <ellipse cx="536" cy="537" rx="22" ry="11" fill="#e0e0e0" stroke="#000" />
      <ellipse cx="534" cy="535" rx="19" ry="9" fill="#ff78c8" stroke="#000" strokeWidth=".8" />

      {/* column */}
      <path d="M485 316l29 2 10 210-22 4z" fill="#808000" stroke="#000" />
      <path d="M514 310l22-4 8 218-22 6z" fill="#141414" />
      <path d="M517 315l8-2 5 215h-8z" fill="#7a4a00" />
      <path d="M527 462l10-4 4 66-10 4z" fill="#7a4a00" />
      <path d="M512 322l6 200M515 322l6 200M533 315l7 205M536 315l7 205" stroke="#ddd" strokeWidth=".8" />
      <path d="M528 315l3 130" stroke="#999" strokeWidth="3" strokeDasharray="1 2" />
      <path d="M484 316l15-1v14l-6 4-8-4z" fill="#222" stroke="#000" />
      <path d="M513 531c4-8 30-8 34 0v6c-6 8-28 8-34 0z" fill="#6b5200" stroke="#000" />
      <ellipse cx="530" cy="529" rx="15" ry="5" fill="#d8c800" stroke="#000" />
      <path d="M524 508l8 2 8-8v24l-8 5-8-3z" fill="#8a6a00" stroke="#000" strokeWidth=".7" />
      <path d="M464 293l31-20 14-2 40 13 1 15-33 19-14 1-38-14z" fill="#7a4600" stroke="#000" />
      <path d="M464 293l1 12 38 14V312z" fill="#8c8600" stroke="#000" strokeWidth=".8" />
      <path d="M464 293l31-20 14-2 40 13 1 6-33 22-14 1-38-14z" fill="#dede00" stroke="#000" />

      {/* upper frame on the right */}
      <Bar a={[643, 400]} b={[643, 414]} w={4} />
      <Bar a={[733, 434]} b={[733, 447]} w={5} />
      <Bar a={[546, 467]} b={[665, 388]} w={5} />
      <Bar a={[665, 388]} b={[751, 418]} w={4} />
      <Bar a={[638, 406]} b={[722, 437]} w={4} />
      <Bar a={[609, 425]} b={[692, 455]} w={4} />
      <Bar a={[579, 444]} b={[660, 474]} w={4} />
      <Bar a={[751, 419]} b={[662, 476]} w={5} />

      {/* upper swing arm */}
      <Bar a={[626, 302]} b={[718, 332]} w={6} c="#00c8d0" d="#005a78" />
      <Bar a={[623, 377]} b={[698, 332]} w={5} c="#d8c820" d="#6a4a00" />
      <Bar a={[560, 358]} b={[640, 308]} w={3} c="#d8c820" d="#6a4a00" />
      <Grip x={621} y={292} h={26} />
      <path d="M546 366 666 293l13 4-133 85z" fill="#00dede" stroke="#000" />
      <path d="M546 382l133-84v13L546 394z" fill="#004a78" stroke="#000" />
      <Bar a={[543, 356]} b={[635, 389]} w={6} c="#00c8d0" d="#005a78" />
      <path d="M546 366l60-37v25l-60 40z" fill="#004a78" />
      <path d="M546 366 666 293l13 4-133 85z" fill="#00dede" stroke="#000" />
      <path d="M546 382l133-84v13L546 394z" fill="#004a78" stroke="#000" />
      <path d="M544 352 630 319" stroke="#222" strokeWidth="3.500" />
      <path d="M544 352 630 319" stroke="#d8d8d8" strokeWidth="1.800" />
      <path d="M627 312l7-2 3 10-8 3z" fill="#2c00a0" stroke="#000" />
      <Grip x={713} y={325} h={33} />
      <Grip x={627} y={379} h={33} />
      <path d="M638 298l7 5M695 321l8 2M550 354l8 4M611 376l8 2" stroke="#222" strokeWidth="5" />
      <path d="M639 298l5 4M696 321l6 2M551 354l6 3M612 376l6 2" stroke="#ddd" strokeWidth="3" />
      <path d="M676 314l6-4M679 309v9M590 370l6-4M593 364v8" stroke="#333" strokeWidth="1.500" />

      {/* carriage */}
      <path d="M537 358l8-2 1 50-8 1z" fill="#666" stroke="#000" />
      <path d="M518 416l10-2 1 45-9 3z" fill="#686868" stroke="#000" />
      <path d="M529 412l16-6 4 8v42l-18 4z" fill="#004a78" stroke="#000" />
      <path d="M532 424v1M537 420v1M534 436v1M543 428v2M533 448v1M540 446v2M545 438v1" stroke="#000" strokeWidth="2" />
      <path d="M520 413l6 2M538 356l6 1M540 404l6 1" stroke="#f0e020" strokeWidth="3" />
      <path d="M535 347l6-3 4 8-6 4z" fill="#0d7a35" stroke="#000" />
      <path d="M537 350l5-2 2 6-5 1z" fill="#2c00a0" />

      {/* conveyor */}
      <Bar a={[546, 489]} b={[572, 498]} w={4} />
      <path d="M625 497l10 3 3 45-10 6zM738 535l12 2v50l-10 4z" fill="#0a7030" stroke="#000" />
      <path d="M625 490l90 30 60 22v8l-60-20-90-30z" fill="#0a7030" stroke="#000" />
      <path d="M692 572l33 9 57-36v8l-57 37-33-10z" fill="#0a5c20" stroke="#000" />
      <path d="M721 580l59-36v8l-55 37z" fill="#0a5c20" stroke="#000" />
      <Bar a={[700, 573]} b={[722, 580]} w={3} c="#00dc00" d="#008a20" />
      <Bar a={[724, 580]} b={[779, 545]} w={3} c="#00dc00" d="#008a20" />
      <path d="M569 534l11 3 3 47-12 3zM681 576l10 2 3 45-11 4z" fill="#0a7030" stroke="#000" />
      <Bar a={[556, 530]} b={[556, 543]} w={5} />
      <Bar a={[682, 578]} b={[682, 586]} w={5} />
      <Bar a={[592, 481]} b={[780, 536]} w={4} />
      <Bar a={[538, 513]} b={[593, 478]} w={4} c="#00dc00" d="#008a20" />
      <Bar a={[538, 514]} b={[715, 574]} w={4} c="#00dc00" d="#008a20" />
      {dividers.map(([a, b], i) => (
        <Bar key={i} a={a} b={b} w={3} />
      ))}
      {rollers.map(([a, b], i) => (
        <g key={i}>
          <Bar a={a} b={b} w={7} c="#e60000" d="#900000" />
          <path d={`M${a[0] - 3} ${a[1] - 3}l6-2 2 7-5 3-4-2z`} fill="#a01800" stroke="#000" />
        </g>
      ))}
      <Bar a={[534, 518]} b={[712, 581]} w={6} />
      <Bar a={[712, 581]} b={[780, 537]} w={4} />

      {/* lower swing arm */}
      <Bar a={[560, 508]} b={[640, 463]} w={4} c="#0098b8" d="#00406a" />
      <Grip x={634} y={455} h={20} />
      <path d="M535 447l10-7 168 61-10 5z" fill="#00dede" stroke="#000" />
      <path d="M535 447l168 59v11L536 460z" fill="#008080" stroke="#000" />
      <path d="M703 506l10-5v12l-10 5z" fill="#c4dede" stroke="#000" />
      <path d="M706 508l6-3v6z" fill="#007878" />
      <path d="M547 422l109 57" stroke="#222" strokeWidth="3.500" />
      <path d="M547 422l109 57" stroke="#e4e4e4" strokeWidth="1.800" />
      <path d="M536 413l7-2 5 9-7 4-5-3zM652 477l7-3 4 5v7l-7 2-4-3z" fill="#2c00a0" stroke="#000" />
      <Bar a={[713, 500]} b={[725, 506]} w={4} c="#d8c820" d="#6a4a00" />
      <Bar a={[584, 503]} b={[674, 536]} w={5} c="#d8c820" d="#6a4a00" />
      <Bar a={[670, 548]} b={[744, 503]} w={5} c="#0090b8" d="#00406a" />
      <Grip x={560} y={502} h={29} />
      <Grip x={739} y={492} h={28} />
      <Grip x={664} y={539} h={30} />
      <path d="M575 498l8-4M728 504l8-5M680 535l8-4M594 486l4-3M702 522l4-4" stroke="#222" strokeWidth="5" />
      <path d="M576 498l6-4M729 504l6-5M681 535l6-4" stroke="#ddd" strokeWidth="3" />

      <Rack />

      {/* axis triad */}
      <g strokeWidth="2.500">
        <path d="M247 671V655" stroke="#108a20" />
        <path d="M247 671l-14-4" stroke="#a02010" />
        <path d="M247 671l12-6" stroke="#1020b0" />
      </g>
      <path d="M247 646l-3.500 10h7z" fill="#18a028" />
      <path d="M224 664l10-2-1 7z" fill="#c02818" />
      <path d="M267 660l-10 1 3 6z" fill="#1828d0" />
      <g className="font-['Liberation_Serif',serif] text-[10px]">
        <text x="218" y="667" fill="#e00000">X</text>
        <text x="242" y="645" fill="#008a00">Y</text>
        <text x="265" y="662" fill="#0000e0">Z</text>
      </g>
    </svg>
  );
}

const viewTools: [string, boolean][] = [
  ["zoomFit", false],
  ["zoomArea", false],
  ["prevView", false],
  ["section", false],
  ["viewOrient", true],
  ["display", true],
  ["glasses", true],
  ["viewBall", false],
  ["scene", true],
  ["viewSet", true],
];
const taskTabs = ["home", "library", "explorer", "palette", "ball", "custom"];

function Viewport() {
  return (
    <main className="relative flex min-w-0 flex-1 flex-col overflow-hidden border-r border-black">
      <Model />
      <div className="relative flex h-[26px] shrink-0 items-center pl-[203px]">
        {viewTools.map(([n, drop]) => (
          <button key={n} type="button" aria-label={n} className={"flex shrink-0 items-center gap-2 " + (drop ? "w-[37px]" : "w-[23px]")}>
            <Icon name={n} />
            {drop && <Caret />}
          </button>
        ))}
        <div className="ml-auto flex gap-[7px] pr-[9px]">
          {["paneL", "paneR", "min", "restore", "close"].map((n) => (
            <button key={n} type="button" aria-label={n}>
              <Icon name={n} />
            </button>
          ))}
        </div>
      </div>
      <div className="relative mt-[33px] ml-auto flex flex-col">
        {taskTabs.map((n, i) => (
          <button
            key={n}
            type="button"
            aria-label={n}
            className={
              "flex h-6 w-[23px] items-center justify-center border-2 border-r-0 border-t-[#eee] border-b-[#222] border-l-[#333] " +
              (i === 4 ? "bg-[#f2f2f2]" : "bg-[#a9a9a9]")
            }
          >
            <Icon name={n} />
          </button>
        ))}
      </div>
    </main>
  );
}

/* ---------- bottom bars ---------- */

function ModelTabs() {
  const arrows = ["M3 2v8M9 2 5 6l4 4z", "M8 2 4 6l4 4z", "M4 2l4 4-4 4z", "M9 2v8M3 2l4 4-4 4z"];
  return (
    <div className="flex h-[15px] shrink-0 border-t border-black bg-[#e5e5e5] leading-[13px]">
      <div className="flex w-[68px] shrink-0 bg-[#bdbdbd]">
        {arrows.map((d) => (
          <button key={d} type="button" aria-label="移动标签" className="flex w-[17px] items-center justify-center border border-[#999] bg-[#b4b4b4]">
            <svg viewBox="0 0 12 12" className="size-3" aria-hidden="true">
              <path d={d} fill="#8a8a8a" stroke="#8a8a8a" />
            </svg>
          </button>
        ))}
      </div>
      <button type="button" className="w-[46px] shrink-0 border border-t-0 border-black bg-[#f2f2f2]">模型</button>
      <button type="button" className="w-[76px] shrink-0 border-r-2 border-b-2 border-[#333] bg-[#a9a9a9] whitespace-nowrap">运动算例 1</button>
      <div className="flex-1 border-r border-black" />
    </div>
  );
}

const sketchA = ["skPoint", "skCircle", "skLine", "skQuad", "skCross", "skTrim"];
const sketchB = ["skTan", "skPerp", "skPar", "skCorner", "skDots", "skDim", "skGrid", "skAngle", "iso", "normal", "tape", "wire"];

function SketchBar() {
  const button = (n: string) => (
    <button key={n} type="button" aria-label={n} className="flex h-[22px] w-[23px] shrink-0 items-center justify-center">
      <Icon name={n} />
    </button>
  );
  return (
    <div className="flex h-7 shrink-0 items-center bg-[#dadada]">
      <div className="ml-[3px] h-[22px] border-l-2 border-dotted border-[#555] pr-[7px]" />
      {sketchA.map(button)}
      <div className="mx-[3px] h-[18px] w-[2px] border-l border-[#777] bg-white" />
      {sketchB.map(button)}
      <button type="button" aria-label="shaded" className="flex h-[22px] w-[23px] shrink-0 items-center justify-center border border-[#444] bg-[#b4b4b4]">
        <Icon name="shaded" />
      </button>
      <div className="ml-1.5 h-full w-[2px] border-l border-[#666] bg-white" />
    </div>
  );
}

function StatusBar() {
  const cell = "h-full border border-t-[#777] border-r-white border-b-white border-l-[#777]";
  return (
    <footer className="flex h-[18px] shrink-0 items-center gap-[3px] bg-[#b5b5b5] leading-4">
      <span className="pl-px">
        <Mixed text="SolidWorks Premium 2014 x64 版" />
      </span>
      <span className={cell + " ml-auto w-11"}>欠定义</span>
      <span className={cell + " w-[5px]"} />
      <span className={cell + " w-[86px] whitespace-pre pl-0.5"}>在编辑  装配体</span>
      <span className={cell + " w-[5px]"} />
      <span className={cell + " w-[6px]"} />
      <button type="button" className="ml-[23px] flex items-center gap-[18px]">
        自定义
        <Caret up />
      </button>
      <button type="button" aria-label="帮助" className="ml-[15px] flex size-[13px] items-center justify-center border border-[#2a5a80] bg-white text-xs leading-3 font-bold text-[#10a020]">
        ?
      </button>
      <button type="button" aria-label="标签" className="mr-[6px] ml-[46px]">
        <Icon name="tag" />
      </button>
    </footer>
  );
}

export default function App() {
  return (
    <div className="h-screen bg-black">
      <div className="flex h-full w-full flex-col rounded-t-lg border border-[#444] bg-[#f1eef0] p-[3px] pb-[2px] font-['Noto_Sans','Noto_Sans_CJK_SC',sans-serif] text-xs text-black">
        <TitleBar />
        <Ribbon />
        <div className="flex min-h-0 flex-1">
          <SidePanel />
          <Viewport />
        </div>
        <ModelTabs />
        <SketchBar />
        <div className="mb-px h-[3px] shrink-0 border-y border-[#888] bg-white" />
        <StatusBar />
      </div>
    </div>
  );
}
